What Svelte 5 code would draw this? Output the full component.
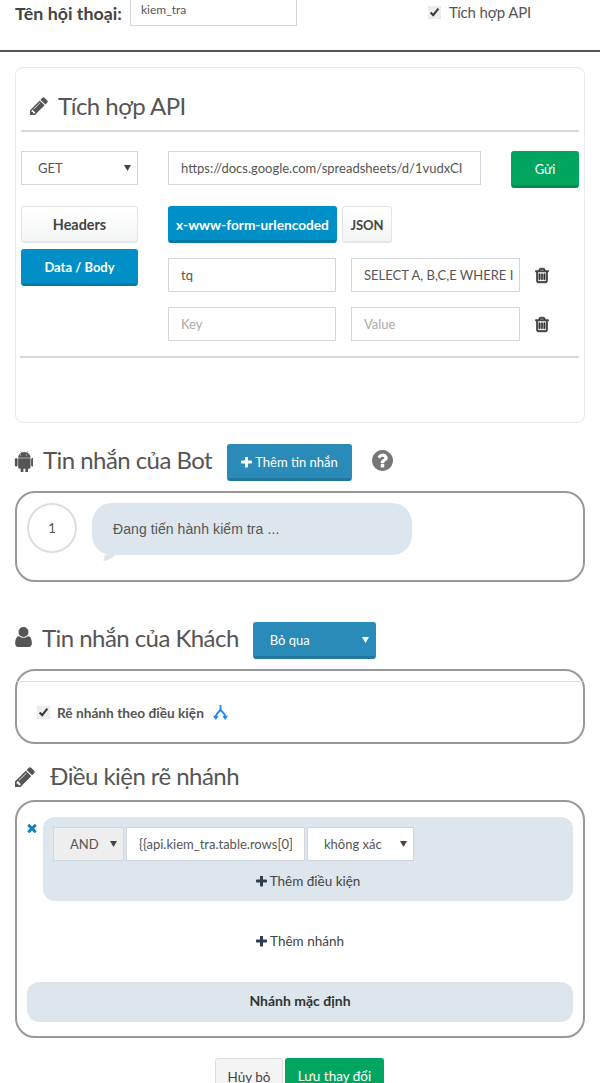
<script>
  const rows = [
    { key: 'tq', value: 'SELECT A, B,C,E WHERE I' },
    { key: '', value: '' }
  ];
  const pencil = 'M491 1536l91-91-235-235-91 91v107h128v128h107zm523-928q0-22-22-22-10 0-17 7l-542 542q-7 7-7 17 0 22 22 22 10 0 17-7l542-542q7-7 7-17zm-54-192l416 416-832 832h-416v-416zm683 96q0 53-37 90l-166 166-416-416 166-165q36-38 90-38 53 0 91 38l235 234q37 39 37 91z';
  const plus = 'M1600 736v192q0 40-28 68t-68 28h-416v416q0 40-28 68t-68 28h-192q-40 0-68-28t-28-68v-416h-416q-40 0-68-28t-28-68v-192q0-40 28-68t68-28h416v-416q0-40 28-68t68-28h192q40 0 68 28t28 68v416h416q40 0 68 28t28 68z';
  const trash = 'M704 736v576q0 14-9 23t-23 9h-64q-14 0-23-9t-9-23v-576q0-14 9-23t23-9h64q14 0 23 9t9 23zm256 0v576q0 14-9 23t-23 9h-64q-14 0-23-9t-9-23v-576q0-14 9-23t23-9h64q14 0 23 9t9 23zm256 0v576q0 14-9 23t-23 9h-64q-14 0-23-9t-9-23v-576q0-14 9-23t23-9h64q14 0 23 9t9 23zm128 724v-948h-896v948q0 22 7 40.500t14.500 27 10.500 8.500h832q3 0 10.500-8.500t14.500-27 7-40.500zm-672-1076h448l-48-117q-7-9-17-11h-317q-10 2-17 11zm928 32v64q0 14-9 23t-23 9h-96v948q0 83-47 143.500t-113 60.500h-832q-66 0-113-58.500t-47-141.500v-952h-96q-14 0-23-9t-9-23v-64q0-14 9-23t23-9h309l70-167q15-37 54-63t79-26h320q40 0 79 26t54 63l70 167h309q14 0 23 9t9 23z';
</script>

<div class="page">
  <div class="top-row">
    <label class="name-label" for="conv-name">Tên hội thoại:</label>
    <input id="conv-name" class="name-input" value="kiem_tra" />
    <label class="api-toggle"><input type="checkbox" checked /> Tích hợp API</label>
  </div>
  <hr class="top-rule" />

  <section class="card">
    <h2 class="card-title">
      <svg class="ic-pencil" viewBox="128 128 1536 1536"><path d={pencil} /></svg>
      Tích hợp API
    </h2>
    <div class="rule"></div>

    <div class="req-row">
      <select class="method"><option>GET</option></select>
      <input class="url" value="https://docs.google.com/spreadsheets/d/1vudxCI" />
      <button class="btn green send">Gửi</button>
    </div>

    <div class="req-body">
      <div class="side-tabs">
        <button class="btn light headers">Headers</button>
        <button class="btn blue">Data / Body</button>
      </div>
      <div class="body-main">
        <div class="type-tabs">
          <button class="btn blue">x-www-form-urlencoded</button>
          <button class="btn light json">JSON</button>
        </div>
        {#each rows as row}
          <div class="kv-row">
            <input value={row.key} placeholder="Key" />
            <input value={row.value} placeholder="Value" />
            <svg class="ic-trash" viewBox="0 0 1408 1792"><path d={trash} transform="translate(-192 0)" /></svg>
          </div>
        {/each}
      </div>
    </div>
    <div class="rule bottom"></div>
  </section>

  <div class="head-row bot">
    <svg class="ic-android" viewBox="0 128 1408 1536"><path d="M493 483q16 0 27.500-11.500t11.500-27.500-11.500-27.500-27.500-11.500-27 11.500-11 27.500 11 27.500 27 11.500zm422 0q16 0 27-11.500t11-27.500-11-27.500-27-11.500-27.500 11.500-11.500 27.500 11.500 27.500 27.500 11.500zm-749 189q42 0 72 30t30 72v430q0 43-29.500 73t-72.500 30-73-30-30-73v-430q0-42 30-72t73-30zm1060 19v666q0 46-32 78t-77 32h-75v227q0 43-30 73t-73 30-73-30-30-73v-227h-138v227q0 43-30 73t-73 30q-42 0-72-30t-30-73l-1-227h-74q-46 0-78-32t-32-78v-666h918zm-232-405q107 55 171 153.500t64 215.500h-925q0-117 64-215.500t172-153.500l-71-131q-7-13 5-20 13-6 20 6l72 132q95-42 201-42t201 42l72-132q7-12 20-6 12 7 5 20zm477 488v430q0 43-30 73t-73 30q-42 0-72-30t-30-73v-430q0-43 30-72.500t72-29.500q43 0 73 29.500t30 72.500z" /></svg>
    <h2>Tin nhắn của Bot</h2>
    <button class="btn steel add-msg">
      <svg class="ic-plus" viewBox="192 192 1408 1408"><path d={plus} /></svg>
      Thêm tin nhắn
    </button>
    <svg class="ic-help" viewBox="128 128 1536 1536"><path d="M1024 1376v-192q0-14-9-23t-23-9h-192q-14 0-23 9t-9 23v192q0 14 9 23t23 9h192q14 0 23-9t9-23zm256-672q0-88-55.500-163t-138.500-116-170-41q-243 0-371 213-15 24 8 42l132 100q7 6 19 6 16 0 25-12 53-68 86-92 34-24 86-24 48 0 85.500 26t37.500 59q0 38-20 61t-68 45q-63 28-115.500 86.500t-52.500 125.500v36q0 14 9 23t23 9h192q14 0 23-9t9-23q0-19 21.500-49.500t54.500-49.500q32-18 49-28.500t46-35 44.500-48 28-60.500 12.500-81zm384 192q0 209-103 385.500t-279.500 279.500-385.500 103-385.500-103-279.500-279.500-103-385.500 103-385.500 279.500-279.500 385.500-103 385.500 103 279.500 279.500 103 385.500z" /></svg>
  </div>

  <div class="panel bot-panel">
    <div class="step">1</div>
    <div class="bubble">
      Đang tiến hành kiểm tra ...
      <svg class="tail" viewBox="0 0 16 8"><path d="M2 0H16C13 4 8 7 0 8 2 5 2 3 2 0Z" /></svg>
    </div>
  </div>

  <div class="head-row guest">
    <svg class="ic-user" viewBox="256 128 1280 1536"><path d="M1536 1399q0 109-62.500 187t-150.500 78h-854q-88 0-150.500-78t-62.500-187q0-85 8.500-160.500t31.500-152 58.500-131 94-89 134.500-34.500q131 128 313 128t313-128q76 0 134.500 34.500t94 89 58.500 131 31.500 152 8.500 160.500zm-256-887q0 159-112.500 271.500t-271.500 112.500-271.500-112.500-112.500-271.500 112.500-271.500 271.500-112.500 271.500 112.500 112.500 271.500z" /></svg>
    <h2>Tin nhắn của Khách</h2>
    <select class="skip"><option>Bỏ qua</option></select>
  </div>

  <div class="panel guest-panel">
    <div class="inner-line"></div>
    <label class="branch-check">
      <input type="checkbox" checked />
      Rẽ nhánh theo điều kiện
      <svg class="ic-branch" viewBox="0 0 16 16" fill="none"><path d="M8 0V4C8 8 3 7 3 13M8 4C8 8 13 7 13 13" /><path class="head" d="M0 11.500H6L3 16ZM10 11.500H16L13 16Z" /></svg>
    </label>
  </div>

  <div class="head-row cond">
    <svg class="ic-pencil-lg" viewBox="128 128 1536 1536"><path d={pencil} /></svg>
    <h2>Điều kiện rẽ nhánh</h2>
  </div>

  <div class="panel cond-panel">
    <div class="branch">
      <svg class="ic-x" viewBox="302 238 1188 1316"><path d="M1490 1322q0 40-28 68l-136 136q-28 28-68 28t-68-28l-294-294-294 294q-28 28-68 28t-68-28l-136-136q-28-28-28-68t28-68l294-294-294-294q-28-28-28-68t28-68l136-136q28-28 68-28t68 28l294 294 294-294q28-28 68-28t68 28l136 136q28 28 28 68t-28 68l-294 294 294 294q28 28 28 68z" /></svg>
      <div class="branch-box">
        <div class="cond-row">
          <select class="op"><option>AND</option></select>
          <input class="cond-var" value={'{{api.kiem_tra.table.rows[0].xxxxxx}}'} />
          <select class="cmp"><option>không xác định</option></select>
        </div>
        <div class="add-link">
          <svg class="ic-plus" viewBox="192 192 1408 1408"><path d={plus} /></svg>
          Thêm điều kiện
        </div>
      </div>
    </div>
    <div class="add-link add-branch">
      <svg class="ic-plus" viewBox="192 192 1408 1408"><path d={plus} /></svg>
      Thêm nhánh
    </div>
    <div class="default-branch">Nhánh mặc định</div>
  </div>

  <div class="footer">
    <button class="btn cancel">Hủy bỏ</button>
    <button class="btn green save">Lưu thay đổi</button>
  </div>
</div>

<style>
  :global(html), :global(body) {
    margin: 0;
    overflow: hidden;
  }

  .page {
    box-sizing: border-box;
    width: 600px;
    height: 1083px;
    overflow: hidden;
    padding: 0 15px;
    background: #fff;
    color: #555;
    font-family: "Lato", "Noto Sans", sans-serif;
    font-size: 14px;
  }

  input, select {
    box-sizing: border-box;
    height: 34px;
    border: 1px solid #d2d6de;
    border-radius: 0;
    background-color: #fff;
    color: #555;
    font-family: inherit;
    font-size: 13px;
    padding: 0 12px;
    outline: none;
  }

  select {
    appearance: none;
    padding: 0 26px 0 16px;
    background-image: url("data:image/svg+xml,%3Csvg xmlns='http://www.w3.org/2000/svg' width='7' height='6'%3E%3Cpath d='M0 0h7L3.500 6z' fill='%23444'/%3E%3C/svg%3E");
    background-repeat: no-repeat;
    background-position: right 6px center;
  }

  input::placeholder {
    color: #aaa;
    opacity: 1;
  }

  input[type='checkbox'] {
    width: 13px;
    height: 13px;
    margin: 0;
    padding: 0;
    accent-color: #eee;
  }

  .top-row {
    display: flex;
    align-items: center;
    height: 34px;
    margin-top: -8px;
  }

  .name-label {
    width: 115px;
    margin-top: 7px;
    font-size: 17.800px;
    font-weight: 700;
    color: #444;
  }

  .name-input {
    width: 167px;
    padding: 0 10px;
    font-size: 12px;
  }

  .api-toggle {
    display: flex;
    align-items: center;
    gap: 8px;
    margin: 6px 0 0 131px;
    font-size: 15px;
    letter-spacing: -0.150px;
  }

  .top-rule {
    height: 2px;
    margin: 24px -15px 15px;
    border: 0;
    background: #555;
  }

  .card {
    box-sizing: border-box;
    height: 356px;
    padding: 0 5px;
    border: 1px solid #e8ebee;
    border-radius: 8px;
  }

  .card-title {
    display: flex;
    align-items: center;
    gap: 10px;
    height: 62px;
    margin: 0;
    padding: 13px 0 0 9px;
    box-sizing: border-box;
    font-size: 24px;
    font-weight: 400;
    letter-spacing: -0.550px;
    color: #555;
  }

  .ic-pencil {
    width: 18px;
    height: 18px;
    fill: #555;
  }

  .rule {
    height: 2px;
    background: #d5d9dc;
  }

  .rule.bottom {
    margin: 15px 0 0 -1px;
  }

  .req-row {
    display: flex;
    align-items: flex-start;
    margin-top: 19px;
  }

  .method {
    width: 117px;
  }

  .url {
    width: 313px;
    margin-left: 30px;
    padding-right: 4px;
  }

  .btn {
    box-sizing: border-box;
    height: 37px;
    border: 1px solid transparent;
    border-bottom-width: 3px;
    border-radius: 3px;
    font-family: inherit;
    font-size: 13px;
    padding: 0;
  }

  .green {
    background: #00a65f;
    border-color: #00a65f #00a65f #008a4f;
    color: #fff;
  }

  .send {
    width: 68px;
    margin-left: 30px;
  }

  .light {
    padding-top: 1px;
    border: 1px solid #e3e6e8;
    border-bottom-width: 2px;
    background: linear-gradient(#fff, #f4f6f6);
    color: #444;
    font-weight: 700;
  }

  .headers {
    font-size: 14.400px;
  }

  .blue {
    padding-top: 1px;
    background: #008fc7;
    border-color: #008fc7 #008fc7 #0079a9;
    color: #fff;
    font-weight: 700;
  }

  .steel {
    background: #2a8bb9;
    border-color: #2a8bb9 #2a8bb9 #23779f;
    color: #fff;
  }

  .req-body {
    display: flex;
    margin-top: 18px;
  }

  .side-tabs {
    display: flex;
    flex-direction: column;
    gap: 6px;
    width: 117px;
  }

  .body-main {
    margin-left: 30px;
  }

  .type-tabs {
    display: flex;
    gap: 5px;
    margin-bottom: 15px;
  }

  .type-tabs .blue {
    width: 169px;
    font-size: 13.700px;
  }

  .json {
    width: 50px;
  }

  .kv-row {
    display: flex;
    align-items: center;
    margin-bottom: 15px;
  }

  .kv-row:last-child {
    margin-bottom: 0;
  }

  .kv-row input {
    width: 168px;
  }

  .kv-row input + input {
    width: 169px;
    margin-left: 15px;
    padding-right: 6px;
  }

  .ic-trash {
    width: 14px;
    height: 17px;
    margin-left: 15px;
    fill: #333;
    stroke: #333;
    stroke-width: 70;
  }

  .head-row {
    display: flex;
    align-items: center;
  }

  .head-row h2 {
    margin: 0;
    font-size: 24px;
    font-weight: 400;
    letter-spacing: -0.550px;
    color: #555;
  }

  .bot h2, .guest h2 {
    margin-bottom: 6px;
  }

  .cond h2 {
    margin-bottom: 4px;
  }

  .ic-android, .ic-user, .ic-pencil-lg {
    fill: #555;
  }

  .ic-android {
    width: 19px;
    height: 22px;
    margin: 0 0 4px -1px;
  }

  .ic-user {
    width: 17px;
    height: 20px;
    margin-bottom: 7px;
  }

  .ic-pencil-lg {
    width: 20px;
    height: 20px;
  }

  .ic-plus {
    width: 11px;
    height: 11px;
    fill: currentColor;
    vertical-align: -1px;
  }

  .bot {
    height: 37px;
    margin-top: 21px;
    gap: 10px;
  }

  .add-msg {
    width: 125px;
    margin-left: 5px;
  }

  .ic-help {
    width: 21px;
    height: 21px;
    margin: -4px 0 0 10px;
    fill: #777;
  }

  .panel {
    box-sizing: border-box;
    border: 2px solid #999;
    border-radius: 20px;
  }

  .bot-panel {
    display: flex;
    align-items: flex-start;
    gap: 15px;
    height: 91px;
    margin-top: 10px;
    padding: 10px;
  }

  .step {
    box-sizing: border-box;
    display: flex;
    align-items: center;
    justify-content: center;
    width: 50px;
    height: 50px;
    border: 2px solid #ddd;
    border-radius: 50%;
    font-size: 13px;
  }

  .bubble {
    position: relative;
    box-sizing: border-box;
    width: 320px;
    height: 52px;
    padding: 17px 21px;
    border-radius: 20px;
    background: #dde6ed;
    font-family: "Liberation Sans", sans-serif;
    font-size: 14px;
    line-height: 18px;
    letter-spacing: 0.080px;
  }

  .tail {
    position: absolute;
    left: 9px;
    top: 52px;
    width: 16px;
    height: 6px;
    fill: #dde6ed;
  }

  .guest {
    height: 37px;
    margin-top: 40px;
    gap: 10px;
  }

  .skip {
    width: 123px;
    height: 37px;
    margin-left: 4px;
    border: 1px solid #2a8bb9;
    border-bottom: 3px solid #23779f;
    border-radius: 3px;
    background-color: #2a8bb9;
    background-image: url("data:image/svg+xml,%3Csvg xmlns='http://www.w3.org/2000/svg' width='7' height='6'%3E%3Cpath d='M0 0h7L3.500 6z' fill='%23fff'/%3E%3C/svg%3E");
    color: #fff;
  }

  .guest-panel {
    height: 75px;
    margin-top: 10px;
  }

  .inner-line {
    height: 1px;
    margin-top: 10px;
    background: #ddd;
  }

  .branch-check {
    display: flex;
    align-items: center;
    gap: 7px;
    margin: 22px 0 0 20px;
    font-size: 13.700px;
    font-weight: 700;
  }

  .ic-branch {
    width: 15px;
    height: 15px;
    margin-left: 2px;
    stroke: #1e88f0;
    stroke-width: 2;
  }

  .ic-branch .head {
    fill: #1e88f0;
    stroke: none;
  }

  .cond {
    height: 34px;
    margin-top: 16px;
    gap: 15px;
  }

  .cond-panel {
    height: 238px;
    margin-top: 6px;
    padding: 15px 10px 0;
  }

  .branch {
    display: flex;
    align-items: flex-start;
  }

  .ic-x {
    width: 10px;
    height: 10px;
    margin-top: 6px;
    fill: #0f7fbd;
    flex: none;
  }

  .branch-box {
    box-sizing: border-box;
    width: 530px;
    height: 84px;
    margin-left: 6px;
    padding: 10px;
    border-radius: 12px;
    background: #dde6ed;
  }

  .cond-row {
    display: flex;
    gap: 2px;
  }

  .op {
    width: 71px;
    padding-right: 0;
    background-color: #eee;
  }

  .cond-var {
    width: 179px;
  }

  .cmp {
    width: 107px;
    padding-right: 30px;
  }

  .add-link {
    margin-top: 12px;
    text-align: center;
    font-size: 13.500px;
    color: #444;
  }

  .add-link .ic-plus {
    fill: #2c3e50;
  }

  .add-branch {
    height: 49px;
    margin-top: 32px;
  }

  .default-branch {
    box-sizing: border-box;
    height: 40px;
    padding-top: 10px;
    border-radius: 12px;
    background: #dde6ed;
    color: #333;
    font-weight: 700;
    text-align: center;
  }

  .footer {
    display: flex;
    justify-content: center;
    gap: 2px;
    margin-top: 20px;
    padding-right: 1px;
  }

  .cancel {
    width: 68px;
    border: 1px solid #ddd;
    background: #f4f4f4;
    color: #444;
    font-size: 13.500px;
  }

  .save {
    width: 99px;
    font-size: 13.500px;
  }
</style>
